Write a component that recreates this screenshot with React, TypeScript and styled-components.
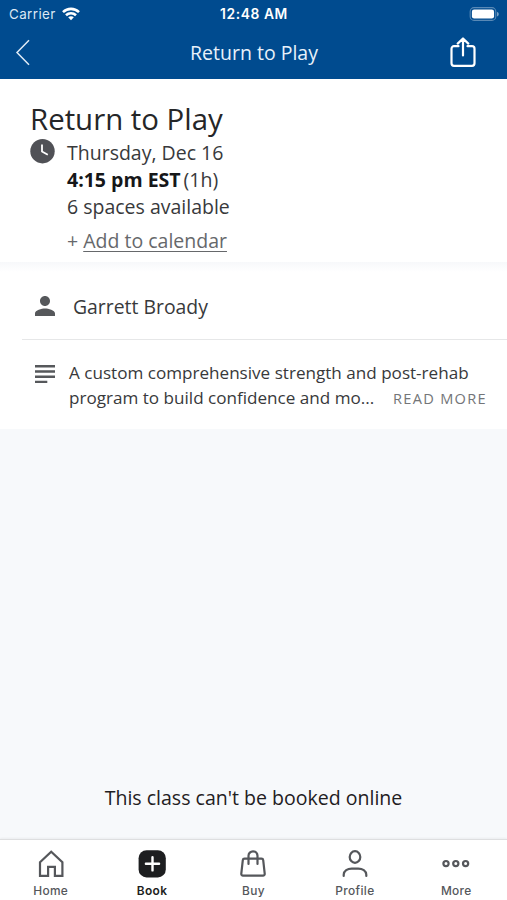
import React from "react";
import styled, { createGlobalStyle } from "styled-components";

const GlobalStyle = createGlobalStyle`
  *, *::before, *::after { box-sizing: border-box; }
  body { margin: 0; }
  svg { display: block; flex: none; }
`;

const Screen = styled.div`
  width: 507px;
  height: 900px;
  display: flex;
  flex-direction: column;
  background: #f7f9fb;
  color: #38393b;
  font-family: "Open Sans", "Noto Sans", sans-serif;
  overflow: hidden;
  white-space: nowrap;
`;

const Header = styled.header`
  height: 79px;
  background: #004b8f;
  color: #fff;
  flex: none;
`;

const ThreeColumns = styled.div`
  display: grid;
  grid-template-columns: 1fr auto 1fr;
  align-items: center;
`;

const StatusBar = styled(ThreeColumns)`
  height: 27px;
  padding: 0 8px 0 9px;
  font: 400 13.4px/28px Inter, sans-serif;
`;

const Carrier = styled.div`
  display: flex;
  align-items: center;
  gap: 6px;
  letter-spacing: 0.4px;
  color: #dce8f4;
`;

const Clock = styled.time`
  font-size: 13.8px;
  font-weight: 600;
  letter-spacing: 0.6px;
`;

const NavBar = styled(ThreeColumns)`
  height: 52px;
  padding: 0 31px 0 15px;
`;

const NavTitle = styled.h1`
  margin: 0 0 0 17px;
  font-size: 19.5px;
  font-weight: 400;
  line-height: 52px;
  color: #e8f1fa;
`;

const IconButton = styled.button<{ $end?: boolean }>`
  padding: 0;
  border: 0;
  background: none;
  color: inherit;
  justify-self: ${(p) => (p.$end ? "end" : "start")};
`;

const Summary = styled.section`
  height: 183px;
  padding: 21px 30px 0;
  background: #fff;
  flex: none;
`;

const ClassName = styled.h2`
  margin: 0 0 1px;
  font-size: 29.4px;
  font-weight: 400;
  line-height: 38px;
  color: #252628;
`;

const Schedule = styled.div`
  display: flex;
  gap: 12px;
`;

const ScheduleLines = styled.div`
  display: flex;
  flex-direction: column;
  font-size: 19.5px;
  line-height: 27px;
`;

const Time = styled.strong`
  font-weight: 700;
  color: #161719;
  margin-right: 3px;
`;

const CalendarLine = styled.div`
  margin-top: 7px;
  color: #66686b;
`;

const CalendarLink = styled.a`
  text-decoration: underline;
  text-decoration-thickness: 1px;
  text-underline-offset: 3px;
`;

const Divider = styled.div`
  height: 10px;
  background: linear-gradient(#f7f8fa, #fff);
  flex: none;
`;

const Details = styled.section`
  height: 157px;
  padding-left: 22px;
  background: #fff;
  flex: none;
`;

const Instructor = styled.div`
  height: 68px;
  display: flex;
  align-items: center;
  gap: 13px;
  padding: 1px 0 0 8px;
  border-bottom: 1px solid #e6e7e8;
  font-size: 19.4px;
`;

const Description = styled.div`
  display: flex;
  gap: 14px;
  padding: 21px 20px 0 13px;
  font-size: 17.1px;
  line-height: 24.5px;
`;

const DescriptionText = styled.div`
  flex: 1;
`;

const LastLine = styled.div`
  display: flex;
  justify-content: space-between;
`;

const ReadMore = styled.a`
  font-size: 14.6px;
  line-height: 24px;
  letter-spacing: 1.3px;
  color: #737578;
`;

const Notice = styled.div`
  flex: 1;
  display: flex;
  align-items: flex-end;
  justify-content: center;
  padding-bottom: 28px;
  font-size: 19.55px;
  line-height: 27px;
  color: #1f2022;
`;

const TabBar = styled.nav`
  height: 61px;
  display: grid;
  grid-template-columns: repeat(5, 1fr);
  background: #fff;
  border-top: 1px solid #dedfe0;
  box-shadow: 0 -1px 2px rgba(0, 0, 0, 0.05);
  flex: none;
`;

const Tab = styled.div<{ $active?: boolean }>`
  display: flex;
  flex-direction: column;
  align-items: center;
  padding-top: 10px;
  gap: 5px;
  font: ${(p) => (p.$active ? 600 : 500)} 11.9px/16px Inter, sans-serif;
  letter-spacing: 0.35px;
  color: ${(p) => (p.$active ? "#1d1e20" : "#55575b")};
`;

const outline = { fill: "none", stroke: "currentColor", strokeWidth: 2.2 };

const WifiIcon = () => (
  <svg width="18" height="14" viewBox="0 0 18 14" fill="none" stroke="#fff" strokeWidth="2.6">
    <path d="M1 5.100C5.500.8 12.500.8 17 5.100M4 8.300c2.800-2.700 7.200-2.700 10 0" />
    <path d="M9 9.200c-1.100 0-2 .4-2.800 1.100L9 13.200l2.800-2.900C11 9.600 10.100 9.200 9 9.200z" fill="#fff" stroke="none" />
  </svg>
);

const BatteryIcon = () => (
  <svg width="30" height="14" viewBox="0 0 31 14" preserveAspectRatio="none">
    <rect x="1.200" y=".6" width="26.500" height="12.800" rx="4" fill="none" stroke="#fff" strokeOpacity=".35" strokeWidth="1.100" />
    <rect x="3" y="2.400" width="22.900" height="9.200" rx="2.300" fill="#fff" />
    <path d="M29 5v4.400c1.200-.4 1.700-1.200 1.700-2.200S30.200 5.400 29 5z" fill="#fff" fillOpacity=".5" />
  </svg>
);

const BackIcon = () => (
  <svg width="15" height="28" viewBox="0 0 15 28" fill="none" stroke="#dfebf6" strokeWidth="1.500">
    <path d="M14 1.200 2 13.500l12 12.300" />
  </svg>
);

const ShareIcon = () => (
  <svg width="26" height="32" viewBox="0 0 26 32" fill="none" stroke="#fff" strokeWidth="2.200" strokeLinejoin="round" strokeLinecap="round">
    <path d="M8.500 9.200H4a2.500 2.500 0 0 0-2.500 2.500v14.600A2.500 2.500 0 0 0 4 28.800h18a2.500 2.500 0 0 0 2.500-2.500V11.700a2.500 2.500 0 0 0-2.500-2.500h-4.500M13 18.500V1.800M7.700 6.600 13 1.500l5.300 5.100" />
  </svg>
);

const ClockIcon = () => (
  <svg width="25" height="25" viewBox="0 0 25 25">
    <circle cx="12.500" cy="12.200" r="12.200" fill="#505156" />
    <path d="M12 5.500v7l5.800 3.200" fill="none" stroke="#fff" strokeWidth="1.800" />
  </svg>
);

const PersonIcon = () => (
  <svg width="30" height="30" viewBox="0 0 24 24" fill="#56585b">
    <path d="M12 12c2.210 0 4-1.790 4-4s-1.790-4-4-4-4 1.790-4 4 1.790 4 4 4zm0 2c-2.670 0-8 1.340-8 4v2h16v-2c0-2.660-5.330-4-8-4z" />
  </svg>
);

const TextIcon = () => (
  <svg width="20" height="24" viewBox="0 0 20 24" fill="#56585b">
    <path d="M0 4h20v2.400H0zM0 9.300h20v2.400H0zM0 14.500h20v2.400H0zM0 19.700h12.300V22H0z" />
  </svg>
);

const HomeIcon = () => (
  <svg width="28" height="28" viewBox="0 0 28 28" {...outline}>
    <path d="M3 12.300 14.200 1.700l11.200 10.600v13.500h-7.500v-9h-6.800v9H3z" />
  </svg>
);

const BookIcon = () => (
  <svg width="28" height="28" viewBox="0 0 28 28">
    <rect x=".6" y=".2" width="27.200" height="27.200" rx="8" fill="#1d1e20" />
    <path d="M14.500 7.200v13.200M7.900 13.800h13.200" stroke="#fff" strokeWidth="2.400" strokeLinecap="round" />
  </svg>
);

const BuyIcon = () => (
  <svg width="28" height="28" viewBox="0 0 28 28" {...outline} strokeLinecap="round" strokeLinejoin="round">
    <path d="M5.500 8.700h17c1 0 1.600.6 1.700 1.500l1.500 13.500c.1 1.100-.6 1.900-1.700 1.900H4c-1.100 0-1.800-.8-1.700-1.900l1.500-13.500c.1-.9.700-1.500 1.700-1.500zM9.500 14V5.800a4.500 4.500 0 0 1 9 0V14" />
  </svg>
);

const ProfileIcon = () => (
  <svg width="28" height="28" viewBox="0 0 28 28" {...outline} strokeLinecap="round">
    <ellipse cx="14" cy="7" rx="5.300" ry="5.800" />
    <path d="M2.700 26v-1.200c0-4 4-6.200 8-6.200h6.600c4 0 8 2.200 8 6.200V26" />
  </svg>
);

const MoreIcon = () => (
  <svg width="28" height="28" viewBox="0 0 28 28" {...outline}>
    <circle cx="4" cy="13.600" r="2.600" />
    <circle cx="13.800" cy="13.600" r="2.600" />
    <circle cx="23.600" cy="13.600" r="2.600" />
  </svg>
);

const tabs = [
  { label: "Home", Icon: HomeIcon },
  { label: "Book", Icon: BookIcon, active: true },
  { label: "Buy", Icon: BuyIcon },
  { label: "Profile", Icon: ProfileIcon },
  { label: "More", Icon: MoreIcon },
];

export default function App() {
  return (
    <Screen>
      <GlobalStyle />
      <Header>
        <StatusBar>
          <Carrier>
            Carrier <WifiIcon />
          </Carrier>
          <Clock>12:48 AM</Clock>
          <IconButton as="div" $end>
            <BatteryIcon />
          </IconButton>
        </StatusBar>
        <NavBar>
          <IconButton aria-label="Back">
            <BackIcon />
          </IconButton>
          <NavTitle>Return to Play</NavTitle>
          <IconButton aria-label="Share" $end>
            <ShareIcon />
          </IconButton>
        </NavBar>
      </Header>
      <Summary>
        <ClassName>Return to Play</ClassName>
        <Schedule>
          <ClockIcon />
          <ScheduleLines>
            <div>Thursday, Dec 16</div>
            <div>
              <Time>4:15 pm EST</Time>(1h)
            </div>
            <div>6 spaces available</div>
            <CalendarLine>
              + <CalendarLink>Add to calendar</CalendarLink>
            </CalendarLine>
          </ScheduleLines>
        </Schedule>
      </Summary>
      <Divider />
      <Details>
        <Instructor>
          <PersonIcon />
          Garrett Broady
        </Instructor>
        <Description>
          <TextIcon />
          <DescriptionText>
            <div>A custom comprehensive strength and post-rehab</div>
            <LastLine>
              program to build confidence and mo... <ReadMore>READ MORE</ReadMore>
            </LastLine>
          </DescriptionText>
        </Description>
      </Details>
      <Notice>This class can't be booked online</Notice>
      <TabBar>
        {tabs.map(({ label, Icon, active }) => (
          <Tab key={label} $active={active}>
            <Icon />
            {label}
          </Tab>
        ))}
      </TabBar>
    </Screen>
  );
}
